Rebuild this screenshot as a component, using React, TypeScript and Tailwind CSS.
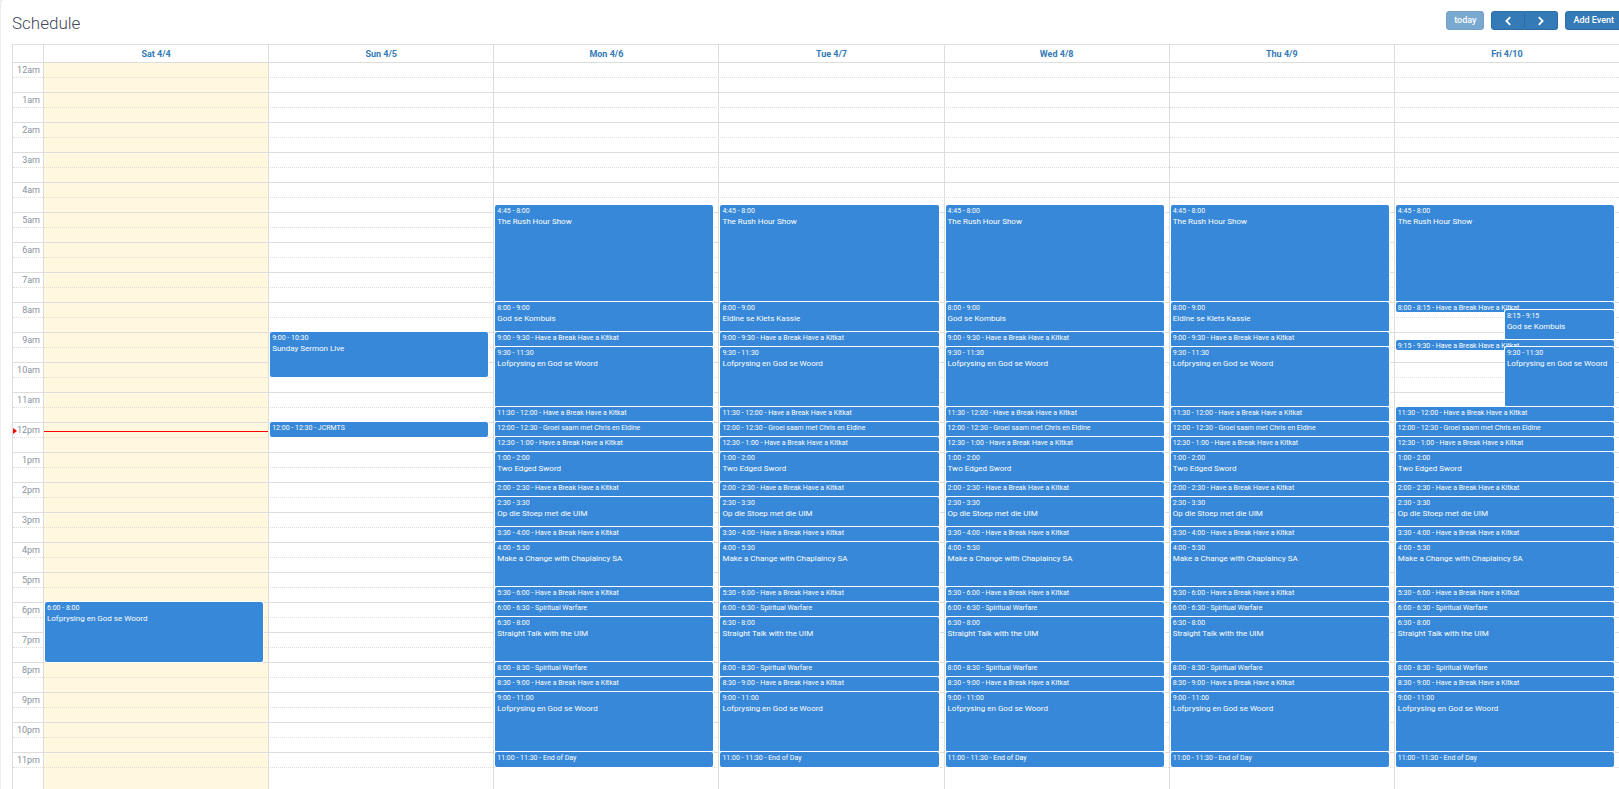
import clsx from 'clsx';

type CalendarEvent = {
  start: number;
  end: number;
  time: string;
  title: string;
  half?: boolean;
};

type Day = {
  label: string;
  today?: boolean;
  events: CalendarEvent[];
};

const HOUR_HEIGHT = 30;
const MIN_EVENT_HEIGHT = 10;
const NOW = 12.3;

const hours = Array.from({ length: 24 }, (_, h) => `${h % 12 === 0 ? 12 : h % 12}${h < 12 ? 'am' : 'pm'}`);

const kitkat = 'Have a Break Have a Kitkat';
const worship = 'Lofprysing en God se Woord';

const rushHour: CalendarEvent = { start: 4.75, end: 8, time: '4:45 - 8:00', title: 'The Rush Hour Show' };

const afternoon: CalendarEvent[] = [
  { start: 11.5, end: 12, time: '11:30 - 12:00', title: kitkat },
  { start: 12, end: 12.5, time: '12:00 - 12:30', title: 'Groei saam met Chris en Eldine' },
  { start: 12.5, end: 13, time: '12:30 - 1:00', title: kitkat },
  { start: 13, end: 14, time: '1:00 - 2:00', title: 'Two Edged Sword' },
  { start: 14, end: 14.5, time: '2:00 - 2:30', title: kitkat },
  { start: 14.5, end: 15.5, time: '2:30 - 3:30', title: 'Op die Stoep met die UIM' },
  { start: 15.5, end: 16, time: '3:30 - 4:00', title: kitkat },
  { start: 16, end: 17.5, time: '4:00 - 5:30', title: 'Make a Change with Chaplaincy SA' },
  { start: 17.5, end: 18, time: '5:30 - 6:00', title: kitkat },
  { start: 18, end: 18.5, time: '6:00 - 6:30', title: 'Spiritual Warfare' },
  { start: 18.5, end: 20, time: '6:30 - 8:00', title: 'Straight Talk with the UIM' },
  { start: 20, end: 20.5, time: '8:00 - 8:30', title: 'Spiritual Warfare' },
  { start: 20.5, end: 21, time: '8:30 - 9:00', title: kitkat },
  { start: 21, end: 23, time: '9:00 - 11:00', title: worship },
  { start: 23, end: 23.5, time: '11:00 - 11:30', title: 'End of Day' },
];

const weekday = (eightOClock: string): CalendarEvent[] => [
  rushHour,
  { start: 8, end: 9, time: '8:00 - 9:00', title: eightOClock },
  { start: 9, end: 9.5, time: '9:00 - 9:30', title: kitkat },
  { start: 9.5, end: 11.5, time: '9:30 - 11:30', title: worship },
  ...afternoon,
];

const days: Day[] = [
  {
    label: 'Sat 4/4',
    today: true,
    events: [{ start: 18, end: 20, time: '6:00 - 8:00', title: worship }],
  },
  {
    label: 'Sun 4/5',
    events: [
      { start: 9, end: 10.5, time: '9:00 - 10:30', title: 'Sunday Sermon Live' },
      { start: 12, end: 12.5, time: '12:00 - 12:30', title: 'JCRMTS' },
    ],
  },
  { label: 'Mon 4/6', events: weekday('God se Kombuis') },
  { label: 'Tue 4/7', events: weekday('Eldine se Klets Kassie') },
  { label: 'Wed 4/8', events: weekday('God se Kombuis') },
  { label: 'Thu 4/9', events: weekday('Eldine se Klets Kassie') },
  {
    label: 'Fri 4/10',
    events: [
      rushHour,
      { start: 8, end: 8.25, time: '8:00 - 8:15', title: kitkat },
      { start: 8.25, end: 9.25, time: '8:15 - 9:15', title: 'God se Kombuis', half: true },
      { start: 9.25, end: 9.5, time: '9:15 - 9:30', title: kitkat },
      { start: 9.5, end: 11.5, time: '9:30 - 11:30', title: worship, half: true },
      ...afternoon,
    ],
  },
];

const EventBlock = ({ event }: { event: CalendarEvent }) => {
  const duration = event.end - event.start;
  const top = Math.round(event.start * HOUR_HEIGHT);
  const height = Math.max(Math.round(event.end * HOUR_HEIGHT) - top, MIN_EVENT_HEIGHT);
  const short = duration <= 0.5;

  return (
    <a
      href="#"
      className={clsx(
        'absolute right-0 overflow-hidden whitespace-nowrap rounded-xs bg-[#3788d8] px-0.5 text-white shadow-[0_0_0_1px_#fff]',
        event.half ? 'left-1/2' : 'left-0',
      )}
      style={{ top, height }}
    >
      {short ? (
        <span className="block text-[7px] leading-3">
          {event.time} - {event.title}
        </span>
      ) : (
        <>
          <span className="block text-[7px] leading-3">{event.time}</span>
          <span className="block text-[8px] leading-[10px]">{event.title}</span>
        </>
      )}
    </a>
  );
};

const Toolbar = () => (
  <header className="-mr-[3px] flex items-start justify-between pb-2.5 pt-[11px]">
    <h1 className="text-[17px] font-light leading-6 text-[#3f4a5a]">Schedule</h1>
    <div className="flex gap-[7px] text-[9px] font-medium leading-[17px] text-white">
      <button disabled className="rounded-[3px] border border-[#2e6da4] bg-[#337ab7] px-[7px] opacity-65">
        today
      </button>
      <div className="flex">
        <button
          aria-label="Previous week"
          className="flex w-[34px] items-center justify-center rounded-l-[3px] border border-[#2e6da4] bg-[#337ab7]"
        >
          <svg viewBox="0 0 8 10" className="h-2.5 w-2" fill="none" stroke="currentColor" strokeWidth="1.8">
            <path d="M6.2 1.2 2.4 5l3.8 3.8" />
          </svg>
        </button>
        <button
          aria-label="Next week"
          className="flex w-[33px] items-center justify-center rounded-r-[3px] border border-l-0 border-[#2e6da4] bg-[#337ab7]"
        >
          <svg viewBox="0 0 8 10" className="h-2.5 w-2" fill="none" stroke="currentColor" strokeWidth="1.8">
            <path d="M1.8 1.2 5.6 5 1.8 8.8" />
          </svg>
        </button>
      </div>
      <button className="rounded-[3px] border border-[#2e6da4] bg-[#337ab7] px-[7px]">Add Event</button>
    </div>
  </header>
);

export default function App() {
  return (
    <div className="flex min-h-screen flex-col overflow-hidden bg-[#ececec] pl-px font-[Roboto,sans-serif]">
      <main className="flex flex-1 flex-col rounded-tl bg-white pl-[11px]">
        <Toolbar />

        <section className="-mt-px flex flex-1 flex-col border-l border-t border-[#ddd]">
          {/* Day names */}
          <div className="grid h-[17px] grid-cols-[30px_repeat(7,minmax(0,1fr))] text-center text-[9px] font-bold leading-[18px] text-[#337ab7]">
            <span />
            {days.map((day) => (
              <a key={day.label} href="#" className="h-[17px] border-l border-[#ddd]">
                {day.label}
              </a>
            ))}
          </div>

          <div className="grid flex-1">
            {/* Column backgrounds */}
            <div className="col-start-1 row-start-1 grid grid-cols-[30px_repeat(7,minmax(0,1fr))]">
              <span />
              {days.map((day) => (
                <span key={day.label} className={clsx('border-l border-[#ddd]', day.today && 'bg-[#fff8df]')} />
              ))}
            </div>

            {/* Hour slots */}
            <div className="col-start-1 row-start-1">
              {hours.map((hour) => (
                <div key={hour} className="h-[30px] border-t border-[#ddd]">
                  <div className="h-3.5 w-[30px] pr-[3px] text-right text-[9px] leading-[14px] text-[#8a919c]">
                    {hour}
                  </div>
                  <div className="border-t border-dotted border-[#ddd]" />
                </div>
              ))}
            </div>

            {/* Events */}
            <div className="col-start-1 row-start-1 grid grid-cols-[30px_repeat(7,minmax(0,1fr))]">
              <div className="relative">
                <span
                  className="absolute left-0 -mt-[3px] border-y-[3px] border-l-4 border-y-transparent border-l-[#f00]"
                  style={{ top: NOW * HOUR_HEIGHT }}
                />
              </div>
              {days.map((day) => (
                <div key={day.label} className="relative pl-px">
                  {day.today && (
                    <span
                      className="absolute left-px right-0 border-t border-[#f00]"
                      style={{ top: NOW * HOUR_HEIGHT }}
                    />
                  )}
                  <div className="relative ml-px mr-[5px] h-full">
                    {day.events.map((event) => (
                      <EventBlock key={event.time} event={event} />
                    ))}
                  </div>
                </div>
              ))}
            </div>
          </div>
        </section>
      </main>
    </div>
  );
}
